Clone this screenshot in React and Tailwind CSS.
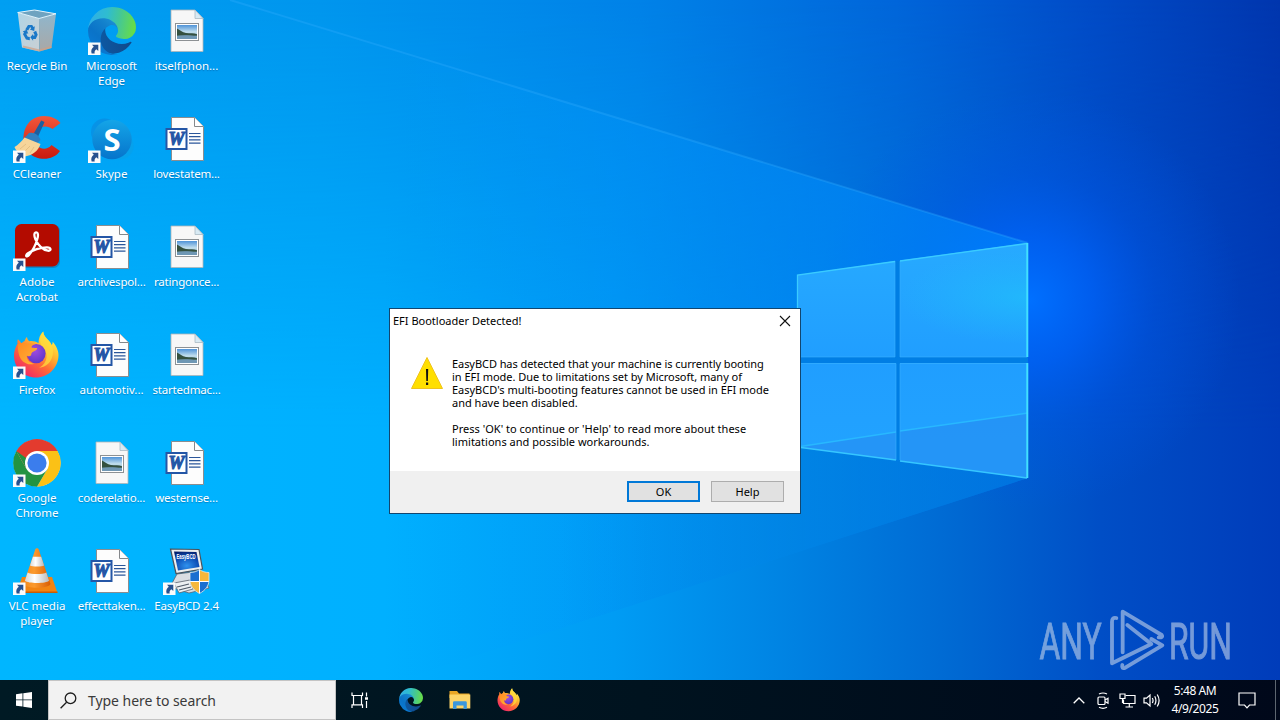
import React from "react";

const EDGE_BACK =
  "M231 190.5c-3.4 1.8-6.9 3.4-10.5 4.7a101.5 101.5 0 0 1-35.9 6.5c-47.3 0-88.5-32.5-88.5-74.3a31.5 31.5 0 0 1 16.4-27.3c-42.8 1.8-53.8 46.4-53.8 72.5 0 73.9 68 81.3 82.7 81.3 7.9 0 19.8-2.3 27-4.6l1.3-.4a128.3 128.3 0 0 0 66.6-52.8 4 4 0 0 0-5.3-5.6Z";
const EDGE_LEFT =
  "M110.3 246.3A79.2 79.2 0 0 1 87.6 225a80.7 80.7 0 0 1 29.5-120c3.1-1.5 8.5-4.1 15.6-4a32.4 32.4 0 0 1 25.7 13 31.9 31.9 0 0 1 6.3 18.7c0-.2 24.5-79.6-80-79.6-43.9 0-80 41.7-80 78.2a130 130 0 0 0 12.1 56 128 128 0 0 0 156.4 67 75.5 75.5 0 0 1-62.8-8z";
const EDGE_TOP =
  "M156.9 153.8c-.8 1-3.4 2.5-3.4 5.6 0 2.6 1.7 5.2 4.8 7.3 14.3 10 41.4 8.6 41.5 8.6a59.6 59.6 0 0 0 30.3-8.3 61.4 61.4 0 0 0 30.4-52.9c.3-22.4-8-37.3-11.3-43.9C228 28.7 182.3 4.9 132.6 4.9A128 128 0 0 0 4.6 131c.5-36.5 36.8-66 80-66 3.5 0 23.5.3 42 10a72.6 72.6 0 0 1 30.9 29.3c6.1 10.6 7.2 24.1 7.2 29.5s-2.7 13.3-7.9 20Z";

function Gradients() {
  return (
    <svg width="0" height="0" className="absolute">
      <defs>
        <linearGradient id="edgeBack" x1="58" y1="177" x2="236" y2="177" gradientUnits="userSpaceOnUse">
          <stop offset="0" stopColor="#0c59a4" />
          <stop offset="1" stopColor="#114a8b" />
        </linearGradient>
        <linearGradient id="edgeLeft" x1="157" y1="90" x2="46" y2="212" gradientUnits="userSpaceOnUse">
          <stop offset="0" stopColor="#1b8fd4" />
          <stop offset=".3" stopColor="#1280cc" />
          <stop offset=".7" stopColor="#0a73c8" />
          <stop offset="1" stopColor="#0a78d0" />
        </linearGradient>
        <linearGradient id="edgeTop" x1="20" y1="70" x2="250" y2="110" gradientUnits="userSpaceOnUse">
          <stop offset="0" stopColor="#2fb0e4" />
          <stop offset=".35" stopColor="#2fbcd0" />
          <stop offset=".65" stopColor="#45c894" />
          <stop offset="1" stopColor="#66dc4a" />
        </linearGradient>
        <linearGradient id="ffBody" x1=".85" y1=".1" x2=".2" y2=".95">
          <stop offset="0" stopColor="#fff04a" />
          <stop offset=".3" stopColor="#ffb92e" />
          <stop offset=".6" stopColor="#ff6a36" />
          <stop offset="1" stopColor="#f0246a" />
        </linearGradient>
        <linearGradient id="ffHead" x1="0" y1="0" x2="1" y2="1">
          <stop offset="0" stopColor="#ff8a1f" />
          <stop offset="1" stopColor="#ffb53a" />
        </linearGradient>
        <radialGradient id="ffCore" cx=".45" cy=".35" r=".7">
          <stop offset="0" stopColor="#a04be0" />
          <stop offset="1" stopColor="#5a36c8" />
        </radialGradient>
        <linearGradient id="skype" x1="0" y1="0" x2="0" y2="1">
          <stop offset="0" stopColor="#14a5e8" />
          <stop offset="1" stopColor="#0674cb" />
        </linearGradient>
        <linearGradient id="ccRed" x1="0" y1="0" x2="0" y2="1">
          <stop offset="0" stopColor="#f2573a" />
          <stop offset="1" stopColor="#c9190f" />
        </linearGradient>
        <linearGradient id="binL" x1="0" y1="0" x2="1" y2="1">
          <stop offset="0" stopColor="#b0d4e6" />
          <stop offset="1" stopColor="#c9d0d4" />
        </linearGradient>
        <linearGradient id="binR" x1="0" y1="0" x2="0" y2="1">
          <stop offset="0" stopColor="#8fb6cc" />
          <stop offset="1" stopColor="#aaa8a6" />
        </linearGradient>
        <linearGradient id="sky" x1="0" y1="0" x2="0" y2="1">
          <stop offset="0" stopColor="#4f93d8" />
          <stop offset=".5" stopColor="#c4e0ee" />
          <stop offset=".75" stopColor="#8bb7cf" />
          <stop offset="1" stopColor="#5e8fb5" />
        </linearGradient>
        <linearGradient id="cone" x1="0" y1="0" x2="1" y2="0">
          <stop offset="0" stopColor="#f58a1c" />
          <stop offset=".4" stopColor="#fb9a2e" />
          <stop offset="1" stopColor="#d85d06" />
        </linearGradient>
        <linearGradient id="coneW" x1="0" y1="0" x2="1" y2="0">
          <stop offset="0" stopColor="#d7d7d7" />
          <stop offset=".4" stopColor="#ffffff" />
          <stop offset="1" stopColor="#b9b9b9" />
        </linearGradient>
        <radialGradient id="screen" cx=".5" cy=".75" r=".8">
          <stop offset="0" stopColor="#2f92ee" />
          <stop offset=".6" stopColor="#0c4cb4" />
          <stop offset="1" stopColor="#04206c" />
        </radialGradient>
      </defs>
    </svg>
  );
}

function Shortcut() {
  return (
    <g>
      <rect x="0" y="35.5" width="12.5" height="12.5" fill="#fbfbfb" />
      <path d="M4 37.8H10.3V44L8.3 42.2c-1.6 1.3-2 2.5-1.6 4.3H3.6c-.9-3 .1-5.1 2.2-6.7z" fill="#27518f" />
    </g>
  );
}

function EdgeMark() {
  return (
    <g transform="translate(-4.6 -5)">
      <path d={EDGE_BACK} fill="url(#edgeBack)" />
      <path d={EDGE_LEFT} fill="url(#edgeLeft)" />
      <path d={EDGE_TOP} fill="url(#edgeTop)" />
    </g>
  );
}

function FirefoxMark() {
  return (
    <g>
      <path d="M4.6 12.4c-.4-1.7-.2-3 .3-4.2 1.5 1.1 2.7 2.6 3.3 4.3 1-1 2.4-2 3.6-2.7.2-1.6 1-3 2.2-3.9.2 1.8 1 3.2 2.5 4.3 3.5-.4 6.5.4 9 2 .1-4.5 1.4-8.7 4.7-11.7 .4 4 2.5 6 4.7 8.2 1.7 1.6 3 3.3 3.8 5.6.7-1.3 1-2.3 1-3.5 2.9 3.4 5.800 8 5.800 13.200 0 12.500-10 22.500-22.500 22.500S1 37 1 24.500c0-4.400 1.500-8.600 3.600-12.100z" fill="url(#ffBody)" />
      <path d="M30.200.5c.4 4 2.500 6 4.700 8.200 4.200 4 5.800 9 4.800 15.300-1.100 7-6.500 12-13.500 12.800 9-5 9.500-15 3.200-21.300-3.700-4.200-2.600-10.500.8-15z" fill="#ffdc3e" opacity=".75" />
      <ellipse cx="23.2" cy="22.6" rx="9.4" ry="9.7" fill="url(#ffCore)" />
      <path d="M5 13.500c2.500-1.800 6-2 9-.8 3.300-.9 5.800-.6 8 .2-2.200.9-3.300 2-3.500 3.300 1.200.8 3.500.7 5.600.7.5 2.200-3.600 3.200-4.800 4.300-1.600 1.400-.5 2.800-1.700 3.600-1.500.9-3.600 0-3.800-.4-.3 4 3 7.600 7.700 8.300-8 2.400-14-3-15.500-9-1-4-1.500-7-1-10.200z" fill="url(#ffHead)" />
    </g>
  );
}

function Icon({ kind }) {
  return (
    <svg width="48" height="48" viewBox="0 0 48 48" className="block shrink-0 overflow-visible">
      {kind === "bin" && (
        <g>
          <path d="M4.7 5.5 26 11.5 26.3 44.5 9 40.5z" fill="url(#binL)" />
          <path d="M26 11.5 43 7 38.5 41 26.3 44.5z" fill="url(#binR)" />
          <path d="M4.7 5.5 21.5 3 43 6.8 26 11.5z" fill="#6fa3c0" />
          <path d="M4.7 5.5 21.5 3 43 6.8 26 11.5z" fill="none" stroke="#e4f3fa" strokeWidth="1" />
          <path d="M10 39.5 26.3 43.5 38.5 40" stroke="#cf9f85" strokeWidth="2" fill="none" opacity=".7" />
          <g fill="#1a78c8">
            <path d="M12.2 22.6 15 18h4.2l1.3 2 1.3-.7-.6 4.7-4.4-1.6 1.4-.8-1-1.5-2 3.300z" />
            <path d="M20.3 25.2l2.800-1.400 1.600 4-2 4.200-2.600.1v1.700l-2.800-3.600 2.800-3.200v1.700l1.600-.4z" />
            <path d="M16.8 33.2l-3.800-.8-3-5.200 1-2-1.300-.8 4-1.700 1.600 4.100-1.400-.5-.5 1 1.400 2.400 2 .4z" />
          </g>
        </g>
      )}
      {kind === "edge" && (
        <g transform="scale(.1875)">
          <EdgeMark />
        </g>
      )}
      {kind === "firefox" && <FirefoxMark />}
      {kind === "image" && (
        <g>
          <path d="M8 3h24l8 8.500V44.500H8z" fill="#f7f7f7" stroke="#b0b5b8" strokeWidth=".8" />
          <path d="M32 3v8.500h8z" fill="#d8eaf4" stroke="#a9bac4" strokeWidth=".8" />
          <rect x="12.5" y="16.5" width="23" height="17" fill="#fff" stroke="#8d9194" strokeWidth="1" />
          <rect x="14" y="18" width="20" height="14" fill="url(#sky)" />
          <path d="M14 21.5c3 1.5 5 3.8 9 4.6 4 .3 8 0 11 1.2v1.5H14z" fill="#34503f" />
          <path d="M14 29c6-1 12-.8 20 .5V32H14z" fill="#6f97b4" />
        </g>
      )}
      {kind === "word" && (
        <g>
          <path d="M8.5 2.5h23l9 9V45.5h-32z" fill="#fdfdfd" stroke="#8a8d90" strokeWidth="1" />
          <path d="M31.5 2.5v9h9" fill="#fff" stroke="#85888b" strokeWidth="1" />
          <path d="M26 18.5h11.5M26 21.7h11.5M26 24.9h11.5M26 28.1h11.5" stroke="#2b569a" strokeWidth="1.2" />
          <rect x="3.5" y="14" width="20" height="20" fill="#fff" stroke="#2456a6" strokeWidth="2" />
          <text x="13.5" y="30" textAnchor="middle" fontFamily="Liberation Serif, serif" fontWeight="700" fontStyle="italic" fontSize="18" fill="#2456a6" stroke="#2456a6" strokeWidth="1.1">W</text>
        </g>
      )}
      {kind === "ccleaner" && (
        <g>
          <path d="M47.5 8C42 1 28-2 18.5 5 8.5 13 8 30 16 38c8 8 24.5 8 31-2l-8.5-6c-4 5-10.5 5-14 .5-3.5-5-3-12 .5-16 4-4 10-4 14.5-.5z" fill="url(#ccRed)" />
          <path d="M28.2 5.5 31.5 7 24 24 19 21.5z" fill="#1c5fa0" />
          <path d="M16 18c5-1.5 10 2 11.5 7l-4 4-12-6z" fill="#2f7fc0" />
          <path d="M1.5 32C5 30 9 26 11.5 22.5L27.5 29C25 36 20 40 12 41.5 7 40 3 36 1.500 32z" fill="#f6d59a" />
          <path d="M7 34l6-5M11 37l6-6M17 38l4-6" stroke="#e0ba7c" strokeWidth=".8" />
        </g>
      )}
      {kind === "skype" && (
        <g>
          <circle cx="16.5" cy="17" r="13.5" fill="#0a8ce0" opacity=".7" />
          <circle cx="32" cy="31" r="13.5" fill="#08a0ea" opacity=".8" />
          <circle cx="24" cy="24.5" r="19.7" fill="url(#skype)" />
          <text x="24" y="35.5" textAnchor="middle" fontFamily="Open Sans, Noto Sans, sans-serif" fontWeight="700" fontSize="31" fill="#fff">S</text>
        </g>
      )}
      {kind === "adobe" && (
        <g>
          <rect x="2" y="1.5" width="45" height="43.5" rx="6.5" fill="#2d1b3a" opacity=".25" />
          <rect x="2" y="1" width="44" height="42.5" rx="6.5" fill="#b30b00" />
          <path d="M22.5 9.500c2.600-.8 3 2.500 1.800 6.500-1.600 6-5.800 13-8.300 16-2.300 2.700-4.300.8-1.300-1.500 4.500-3.500 13-6.300 19.300-6.200 4.500.2 4.500 3.800.8 3.400-5-.6-10-6-12.300-11.200-1.200-3-2-6 0-7z" fill="none" stroke="#fff" strokeWidth="2.3" strokeLinejoin="round" />
        </g>
      )}
      {kind === "chrome" && (
        <g transform="translate(0 -1)">
          <circle cx="24" cy="25" r="23.5" fill="#fff" />
          <path d="M24 25 3.4 13A23.8 23.8 0 0 1 44.6 13z" fill="#e33b2e" />
          <path d="M24 13h20.6A23.8 23.8 0 0 1 24 48.8L34.4 31z" fill="#fbc116" />
          <path d="M34.4 31 24 48.8A23.8 23.8 0 0 1 3.4 13L13.6 31z" fill="#229342" />
          <path d="M3.4 13 13.6 31 24 25V13z" fill="#e33b2e" />
          <path d="M3.4 13 13.6 31 18 34 13 20z" fill="#229342" />
          <circle cx="24" cy="25" r="12" fill="#fff" />
          <circle cx="24" cy="25" r="9.6" fill="#3b7ded" />
        </g>
      )}
      {kind === "vlc" && (
        <g>
          <path d="M9 30h30l5.5 16h-41z" fill="#f28412" />
          <path d="M3.5 44.5h41V46h-41z" fill="#c95c05" />
          <path d="M22 3.2c.5-2.5 3.5-2.5 4 0L37.5 37c-2 5-25 5-27 0z" fill="url(#cone)" />
          <path d="M19.9 9.8h8.3l2.9 8.6c-2 1.5-12 1.5-14.1 0z" fill="url(#coneW)" />
          <path d="M14.6 25.5c3 2 15.5 2 18.8 0l2.7 8.2c-3 3-21 3-24.200 0z" fill="url(#coneW)" />
        </g>
      )}
      {kind === "easybcd" && (
        <g>
          <path d="M14 27l24-3 8 17-20 5-19-6z" fill="#d9dde2" stroke="#5d6570" strokeWidth=".8" />
          <path d="M11 36l16-3 3 9-14 4z" fill="#eceff2" stroke="#59616c" strokeWidth=".8" />
          <path d="M14 40l12-3M16 43l12-3" stroke="#4e5967" strokeWidth="1.2" />
          <path d="M7.5 2 36 2.5 39.5 22 13 26.5z" fill="#eceeee" stroke="#49525c" strokeWidth="1.2" />
          <path d="M11 4.5 33.5 5 36.5 20 15 23.5z" fill="url(#screen)" />
          <text x="13.5" y="12" fontFamily="Liberation Sans, sans-serif" fontWeight="700" fontSize="6.5" fill="#fff" textLength="19" lengthAdjust="spacingAndGlyphs">EasyBCD</text>
          <path d="M36.5 22.5c2.7 2 5.7 3 9.5 3V33c0 6-4 10.500-9.500 13.500z" fill="#f6b73c" />
          <path d="M36.5 22.5c-2.7 2-5.7 3-9.500 3V33c0 6 4 10.500 9.500 13.500z" fill="#1a6fd0" />
          <path d="M27 34.5h9.5v12c-5-2.500-9-6.500-9.500-12z" fill="#f6b73c" />
          <path d="M46 34.5h-9.5v12c5-2.500 9-6.500 9.500-12z" fill="#1a6fd0" />
          <path d="M36.5 22.5v24M27 34.5h19" stroke="#fff" strokeWidth="1" />
          <path d="M36.5 22.5c2.7 2 5.7 3 9.5 3V33c0 6-4 10.500-9.500 13.500C31 43.500 27 39 27 33v-7.500c3.800 0 6.800-1 9.500-3z" fill="none" stroke="#dfe8ee" strokeWidth=".8" />
        </g>
      )}
      {["edge", "firefox", "ccleaner", "skype", "adobe", "chrome", "vlc", "easybcd"].includes(kind) && <Shortcut />}
    </svg>
  );
}

const ICONS = [
  ["bin", ["Recycle Bin"]],
  ["ccleaner", ["CCleaner"]],
  ["adobe", ["Adobe", "Acrobat"]],
  ["firefox", ["Firefox"]],
  ["chrome", ["Google", "Chrome"]],
  ["vlc", ["VLC media", "player"]],
  ["edge", ["Microsoft", "Edge"]],
  ["skype", ["Skype"]],
  ["word", ["archivespol..."]],
  ["word", ["automotiv..."]],
  ["image", ["coderelatio..."]],
  ["word", ["effecttaken..."]],
  ["image", ["itselfphon..."]],
  ["word", ["lovestatem..."]],
  ["image", ["ratingonce..."]],
  ["image", ["startedmac..."]],
  ["word", ["westernse..."]],
  ["easybcd", ["EasyBCD 2.4"]],
];

const TIGHT = new Set(["lovestatem...", "startedmac...", "EasyBCD 2.4", "westernse...", "ratingonce...", "archivespol...", "coderelatio...", "effecttaken..."]);

function Wallpaper() {
  return (
    <svg width="1280" height="720" viewBox="0 0 1280 720" className="absolute inset-0">
      <defs>
        <linearGradient id="wTop" x1="0" y1="0" x2="1280" y2="0" gradientUnits="userSpaceOnUse">
          <stop offset="0" stopColor="#009ff2" />
          <stop offset=".25" stopColor="#0096ee" />
          <stop offset=".5" stopColor="#0082e8" />
          <stop offset=".7" stopColor="#0066da" />
          <stop offset=".85" stopColor="#004cc8" />
          <stop offset="1" stopColor="#0036ae" />
        </linearGradient>
        <linearGradient id="wBottom" x1="0" y1="0" x2="1280" y2="0" gradientUnits="userSpaceOnUse">
          <stop offset="0" stopColor="#00b6ff" />
          <stop offset=".3" stopColor="#00b0ff" />
          <stop offset=".48" stopColor="#009cf4" />
          <stop offset=".62" stopColor="#0082e2" />
          <stop offset=".75" stopColor="#0068d2" />
          <stop offset=".86" stopColor="#004ec6" />
          <stop offset="1" stopColor="#003cba" />
        </linearGradient>
        <linearGradient id="wFade" x1="0" y1="0" x2="0" y2="1">
          <stop offset="0" stopColor="#000" />
          <stop offset=".6" stopColor="#fff" />
        </linearGradient>
        <mask id="wMask">
          <rect width="1280" height="720" fill="url(#wFade)" />
        </mask>
        <radialGradient id="wGlow" cx="1030" cy="300" r="210" gradientUnits="userSpaceOnUse">
          <stop offset="0" stopColor="#0070ff" />
          <stop offset=".3" stopColor="#0062fa" stopOpacity=".75" />
          <stop offset=".6" stopColor="#0058ee" stopOpacity=".35" />
          <stop offset="1" stopColor="#0058e8" stopOpacity="0" />
        </radialGradient>
        <linearGradient id="wBeam" x1="230" y1="0" x2="1028" y2="0" gradientUnits="userSpaceOnUse">
          <stop offset=".2" stopColor="#00a4ff" stopOpacity="0" />
          <stop offset=".5" stopColor="#0096ff" stopOpacity=".45" />
          <stop offset=".8" stopColor="#008eff" stopOpacity=".85" />
          <stop offset="1" stopColor="#008aff" stopOpacity=".9" />
        </linearGradient>
        <linearGradient id="wLow" x1="560" y1="0" x2="1028" y2="0" gradientUnits="userSpaceOnUse">
          <stop offset="0" stopColor="#0080d4" stopOpacity="0" />
          <stop offset=".5" stopColor="#007cd4" stopOpacity=".4" />
          <stop offset="1" stopColor="#0070d8" stopOpacity=".6" />
        </linearGradient>
        <linearGradient id="pane" x1="0" y1="243" x2="0" y2="478" gradientUnits="userSpaceOnUse">
          <stop offset="0" stopColor="#27aaff" />
          <stop offset=".5" stopColor="#209eff" />
          <stop offset="1" stopColor="#22a4ff" />
        </linearGradient>
        <radialGradient id="paneLight" cx="1028" cy="298" r="130" gradientUnits="userSpaceOnUse" gradientTransform="translate(0 190) scale(1 .36)">
          <stop offset="0" stopColor="#20c4fa" stopOpacity=".6" />
          <stop offset="1" stopColor="#20c0fa" stopOpacity="0" />
        </radialGradient>
        <filter id="soft">
          <feGaussianBlur stdDeviation="6" />
        </filter>
      </defs>
      <rect width="1280" height="720" fill="url(#wTop)" />
      <rect width="1280" height="720" fill="url(#wBottom)" mask="url(#wMask)" />
      <rect x="780" width="500" height="540" fill="url(#wGlow)" />
      <path d="M230 0 1028 243V478L400 680H0V0z" fill="url(#wBeam)" opacity=".65" />
      <path d="M560 462 797 447 1028 478 560 628.500z" fill="url(#wLow)" />
      <path d="M230 0 1028 243" stroke="#35aeff" strokeWidth="2" opacity=".3" fill="none" />
      <path d="M1028 240V480" stroke="#0078ff" strokeWidth="14" opacity=".6" filter="url(#soft)" />
      <path d="M797 275 1028 243V478L797 447z" fill="#007ee4" />
      <path d="M797 275 895 261V357H797zM900 260.5 1028 243V357H900zM797 363H896V460L797 447zM900 363H1028V478L900 460.500z" fill="url(#pane)" />
      <path d="M900 260.5 1028 243V357H900z" fill="url(#paneLight)" />
      <path d="M797 447 896 432V460zM900 431 1028 413V478L900 460.500z" fill="#2690f4" opacity=".75" />
      <path d="M797 447 896 432M900 431 1028 413" stroke="#28b8ff" strokeWidth="1.5" />
      <path d="M895 261V357H797M900 261V357H1027M797 363.5H896V460M900 460V363.5H1027" fill="none" stroke="#38b2ff" strokeWidth="1" opacity=".6" />
      <path d="M797.5 357V275L895 261.5M900 261 1027 243.500" fill="none" stroke="#3acbff" strokeWidth="1.3" />
      <path d="M797 447 896 460M900 461 1027 478" fill="none" stroke="#36c6ff" strokeWidth="1.5" />
      <path d="M1027.3 243V357M1027.3 363V478" fill="none" stroke="#42e0ff" strokeWidth="2" />
    </svg>
  );
}

function Watermark() {
  return (
    <svg width="240" height="74" viewBox="0 0 240 74" className="absolute left-[1035px] top-[605px] overflow-visible opacity-60">
      <g fill="#c3d3ea" stroke="#c3d3ea" strokeWidth="1" fontFamily="Roboto, sans-serif" fontSize="50.5">
        <text transform="translate(4.5 54) scale(.63 1)">ANY</text>
        <text transform="translate(134 54) scale(.63 1)">RUN</text>
      </g>
      <g transform="translate(65 0) scale(.3333)" fill="none" stroke="#c3d3ea" strokeWidth="11.5" strokeLinejoin="round" strokeLinecap="round">
        <path d="M49 39Q36 36 36 50V175L154 117L82 60M68 142V20L185 90Q190 98 176 97M67 180Q64 193 76 188L187 121L154 102" />
      </g>
    </svg>
  );
}

function Dialog() {
  return (
    <div className="absolute left-[389px] top-[308px] flex h-[206px] w-[412px] flex-col border border-[#12466f] bg-white font-['Noto_Sans','Open_Sans',sans-serif] text-[11px] text-black">
      <div className="flex h-6 shrink-0 items-center justify-between pl-[3px] pr-[9px]">
        <span className="whitespace-nowrap">EFI Bootloader Detected!</span>
        <svg width="12" height="12" viewBox="0 0 12 12">
          <path d="M1 1l10 10M11 1L1 11" stroke="#111" strokeWidth="1.1" />
        </svg>
      </div>
      <div className="flex flex-1 pl-[21px] pt-[24px]">
        <svg width="32" height="32" viewBox="0 0 32 32" className="mr-[9px] shrink-0">
          <path d="M16 .5 31.5 31.5H.5z" fill="#ffdf00" stroke="#efc31c" strokeWidth="1" />
          <path d="M15 12h2.200l-.3 12h-1.600zM15 25.500h2.200v2.500H15z" fill="#111" />
        </svg>
        <div className="flex flex-col whitespace-nowrap leading-[13px]">
          <span className="tracking-[-0.065px]">EasyBCD has detected that your machine is currently booting</span>
          <span className="tracking-[-0.025px]">in EFI mode. Due to limitations set by Microsoft, many of</span>
          <span className="tracking-[-0.015px]">EasyBCD's multi-booting features cannot be used in EFI mode</span>
          <span>and have been disabled.</span>
          <span className="mt-[13px] tracking-[0.02px]">Press 'OK' to continue or 'Help' to read more about these</span>
          <span className="tracking-[0.02px]">limitations and possible workarounds.</span>
        </div>
      </div>
      <div className="flex h-[42px] shrink-0 items-start justify-end gap-[11px] bg-[#f0f0f0] pr-4 pt-[10px]">
        <button className="flex h-[21px] w-[73px] items-center justify-center border-2 border-[#0078d7] bg-[#e1e1e1] pt-[2px]">OK</button>
        <button className="flex h-[21px] w-[73px] items-center justify-center border border-[#adadad] bg-[#e1e1e1] pt-[2px]">Help</button>
      </div>
    </div>
  );
}

function Taskbar() {
  return (
    <div className="absolute bottom-0 left-0 flex h-10 w-full items-stretch bg-linear-to-r from-[#001a24] via-[#00131f] to-[#00081a] font-['Noto_Sans','Open_Sans',sans-serif] text-white">
      <div className="flex w-12 items-center justify-center">
        <svg width="16" height="16" viewBox="0 0 16 16" fill="#fff">
          <path d="M0 2.2 6.5 1.3V7.5H0zM7.3 1.200 16 0v7.500H7.300zM0 8.300h6.500v6.300L0 13.700zM7.300 8.300H16V16l-8.700-1.200z" />
        </svg>
      </div>
      <div className="flex w-72 items-center border border-[#c4c4c4] bg-[#f2f2f2] pl-[11px] text-[#3a3a3a]">
        <svg width="17" height="17" viewBox="0 0 17 17" fill="none" stroke="#1e1e1e" strokeWidth="1.3">
          <circle cx="10.5" cy="6.3" r="5.3" />
          <path d="M6.6 10.2.6 16.3" />
        </svg>
        <span className="ml-[11px] whitespace-nowrap text-[14px] tracking-[-0.05px]">Type here to search</span>
      </div>
      <div className="flex w-12 items-center justify-center">
        <svg width="18" height="17" viewBox="0 0 18 17" fill="none" stroke="#fff" strokeWidth="1.2">
          <path d="M1 .5V3.500H11.500V.5M2.500 3.500V12.800M10.500 3.500V12.800M1 16V12.800H11.500V16" />
          <path d="M15.5 .5V4.500M15.500 9V16" />
          <path d="M14 6.500h3" strokeWidth="2.5" />
        </svg>
      </div>
      <div className="ml-[3px] flex w-12 items-center justify-center">
        <svg width="24" height="24" viewBox="0 0 256 256">
          <EdgeMark />
        </svg>
      </div>
      <div className="flex w-[49px] items-center justify-center">
        <svg width="22" height="20" viewBox="0 0 22 20">
          <path d="M.5 1H8l2 2.500h10.500V8H.5z" fill="#e9a625" />
          <path d="M.5 4.500h20.800V18.500H.5z" fill="#fdd468" />
          <path d="M4 19V12.500Q4 11.200 5.300 11.200H16.500Q17.800 11.200 17.800 12.500V19H14.500V15.500H7.500V19z" fill="#3b97dc" />
        </svg>
      </div>
      <div className="ml-px flex w-12 items-center justify-center">
        <svg width="24" height="24" viewBox="0 0 48 48">
          <FirefoxMark />
        </svg>
      </div>
      <div className="ml-auto flex items-center">
        <svg width="12" height="7" viewBox="0 0 12 7" fill="none" stroke="#fff" strokeWidth="1.3">
          <path d="M.7 6.300 6 1l5.300 5.300" />
        </svg>
        <svg width="12" height="17" viewBox="0 0 12 17" fill="none" stroke="#fff" strokeWidth="1.2" className="ml-3">
          <rect x="1" y="5" width="7" height="7.5" rx="1" />
          <path d="M8 8 11 6.200V11.300L8 9.500M2 2Q6 0 10 2M2 15.300Q6 17.300 10 15.300" />
        </svg>
        <svg width="17" height="15" viewBox="0 0 17 15" fill="none" stroke="#fff" strokeWidth="1.2" className="ml-[10px]">
          <path d="M6.500 2.500H16V10.500H4.500V6.500M10.300 10.500V13.500M6.500 14H14" />
          <path d="M1 1H6V5.500H1zM3.500 5.500V10" />
        </svg>
        <svg width="18" height="15" viewBox="0 0 18 15" fill="none" stroke="#fff" strokeWidth="1.2" className="ml-[7px]">
          <path d="M1 5.200H3.500L7 2V13L3.500 9.800H1z" />
          <path d="M9.300 5Q10.800 7.500 9.300 10M11.700 3.300Q14.200 7.500 11.700 11.700M14.200 1.500Q18 7.500 14.200 13.500" />
        </svg>
        <div className="ml-2 flex w-[52px] flex-col items-center whitespace-nowrap text-[12px] leading-[18px] tracking-[-0.42px]">
          <span>5:48 AM</span>
          <span>4/9/2025</span>
        </div>
        <svg width="18" height="17" viewBox="0 0 18 17" fill="none" stroke="#fff" strokeWidth="1.2" className="ml-[17px] mr-[19px]">
          <path d="M1 1H17V13H11.500L9 15.800 6.500 13H1z" />
        </svg>
        <div className="mr-1 h-10 w-px bg-[#5d6670]" />
      </div>
    </div>
  );
}

export default function App() {
  return (
    <div className="relative h-[720px] w-[1280px] overflow-hidden bg-[#0090f0]">
      <Gradients />
      <Wallpaper />
      <div className="relative grid w-fit grid-flow-col grid-cols-[74px_75px_75px] grid-rows-[repeat(6,108px)] font-['Noto_Sans','Open_Sans',sans-serif] text-[11.5px] leading-[15px] text-white">
        {ICONS.map(([kind, lines]) => (
          <div key={lines[0]} className="flex flex-col items-center pt-[7px]">
            <Icon kind={kind} />
            <div className="mt-[3px] flex flex-col items-center whitespace-nowrap [text-shadow:0_1px_1px_rgba(0,40,90,0.35)]">
              {lines.map((line) => (
                <span key={line} className={TIGHT.has(line) ? "tracking-[-0.18px]" : ""}>
                  {line}
                </span>
              ))}
            </div>
          </div>
        ))}
      </div>
      <Watermark />
      <Dialog />
      <Taskbar />
    </div>
  );
}
